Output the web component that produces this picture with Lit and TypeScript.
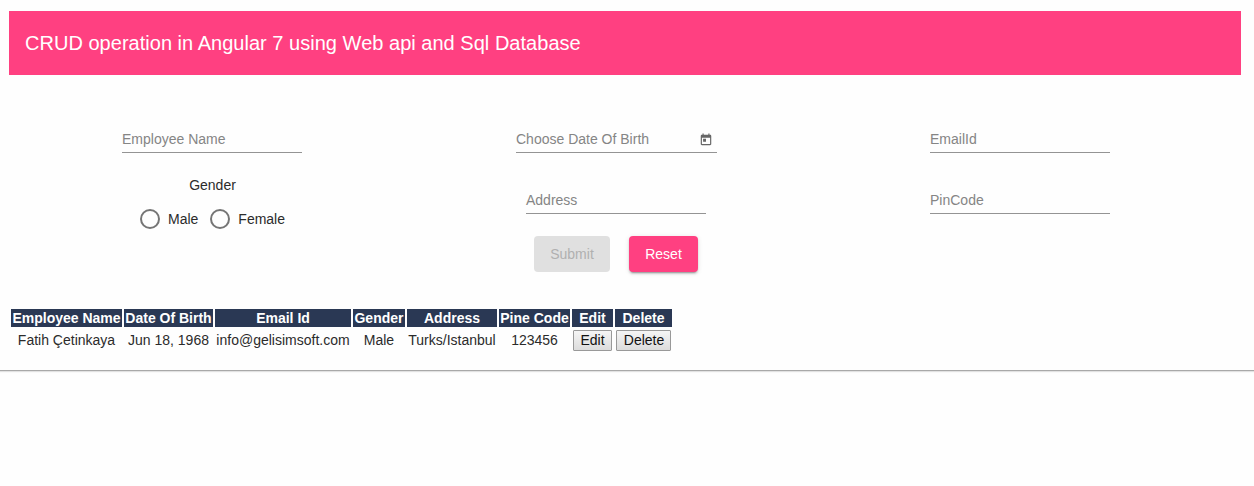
import { LitElement, html, css } from 'lit';
import { customElement, property } from 'lit/decorators.js';

@customElement('form-field')
class FormField extends LitElement {
  @property() label = '';

  static styles = css`
    :host { display: block; width: 180px; }
    .field {
      display: flex;
      align-items: center;
      justify-content: space-between;
      height: 26px;
      box-sizing: border-box;
      padding-bottom: 2px;
      border-bottom: 1px solid #949494;
      color: #858585;
      white-space: nowrap;
    }
    .suffix { display: flex; padding: 2px 4px 0 0; }
  `;

  render() {
    return html`<div class="field"><span>${this.label}</span><span class="suffix"><slot></slot></span></div>`;
  }
}

@customElement('app-root')
class AppRoot extends LitElement {
  private employees = [
    { name: 'Fatih Çetinkaya', birth: 'Jun 18, 1968', email: 'info@gelisimsoft.com', gender: 'Male', address: 'Turks/Istanbul', pin: '123456' },
  ];

  static styles = css`
    :host {
      display: block;
      height: 486px;
      overflow: hidden;
      background: #fefefe;
      color: #2b2b2b;
      font: 14px/18px "Liberation Sans", Arial, sans-serif;
    }
    .card {
      box-sizing: border-box;
      height: 371px;
      padding: 11px 13px 0 9px;
      border-bottom: 1px solid #a9a9a9;
      box-shadow: 0 1px 1px #e2e2e2;
    }
    .toolbar {
      display: flex;
      align-items: center;
      height: 64px;
      box-sizing: border-box;
      padding: 0 16px;
      background: #ff4081;
      color: #fff;
      font-size: 20px;
      line-height: 32px;
      letter-spacing: 0.022px;
      white-space: nowrap;
    }
    .form {
      display: grid;
      grid-template-columns: repeat(3, 404px);
      grid-template-rows: 49px 60px 36px;
      justify-items: center;
      padding: 52px 0 0 1px;
    }
    .date { width: 201px; margin-left: 1px; }
    .second { margin-top: 12px; }
    .gender { display: flex; flex-direction: column; align-items: center; padding-left: 1px; }
    .radios { display: flex; gap: 12px; margin-top: 15px; }
    .radio { display: flex; align-items: center; gap: 8px; height: 20px; }
    .dot {
      width: 20px;
      height: 20px;
      box-sizing: border-box;
      border: 2px solid #757575;
      border-radius: 50%;
    }
    .actions { grid-column: 2; display: flex; gap: 19px; }
    .btn {
      width: 76px;
      height: 36px;
      border: 0;
      border-radius: 4px;
      padding: 0;
      background: #e0e0e0;
      color: #b0b0b0;
      font: inherit;
    }
    .accent {
      width: 69px;
      background: #ff4081;
      color: #fff;
      box-shadow: 0 3px 1px -2px rgba(0,0,0,.2), 0 2px 2px rgba(0,0,0,.14), 0 1px 5px rgba(0,0,0,.12);
    }
    .list {
      display: grid;
      grid-template-columns: 111px 89px 136px 52px 90px 71px 41px 57px;
      gap: 2px;
      padding: 37px 0 0 2px;
      text-align: center;
      white-space: nowrap;
    }
    .head { height: 18px; background: #2a3854; color: #fff; font-weight: bold; }
    .cell { display: flex; align-items: center; justify-content: center; height: 22px; }
    .control { height: 23px; }
    .small {
      width: 39px;
      height: 21px;
      box-sizing: border-box;
      padding: 0 0 1px;
      border: 1px solid #999;
      border-radius: 1px;
      background: linear-gradient(#f5f5f5, #dcdcdc);
      color: #111;
      font: inherit;
    }
    .wide { width: 55px; padding-left: 1px; }
  `;

  render() {
    const heads = ['Employee Name', 'Date Of Birth', 'Email Id', 'Gender', 'Address', 'Pine Code', 'Edit', 'Delete'];
    return html`
      <div class="card">
        <div class="toolbar">CRUD operation in Angular 7 using Web api and Sql Database</div>
        <div class="form">
          <form-field label="Employee Name"></form-field>
          <form-field class="date" label="Choose Date Of Birth">
            <svg width="14" height="14" viewBox="0 0 24 24" fill="#666">
              <path d="M19 3h-1V1h-2v2H8V1H6v2H5c-1.11 0-1.99.9-1.99 2L3 19c0 1.100.89 2 2 2h14c1.100 0 2-.9 2-2V5c0-1.100-.9-2-2-2zm0 16H5V8h14v11zM7 10h5v5H7z" />
            </svg>
          </form-field>
          <form-field label="EmailId"></form-field>
          <div class="gender">
            <div>Gender</div>
            <div class="radios">
              <label class="radio"><span class="dot"></span>Male</label>
              <label class="radio"><span class="dot"></span>Female</label>
            </div>
          </div>
          <form-field class="second" label="Address"></form-field>
          <form-field class="second" label="PinCode"></form-field>
          <div class="actions">
            <button class="btn" disabled>Submit</button>
            <button class="btn accent">Reset</button>
          </div>
        </div>
        <div class="list">
          ${heads.map((h) => html`<div class="head">${h}</div>`)}
          ${this.employees.map((e) => html`
            ${[e.name, e.birth, e.email, e.gender, e.address, e.pin].map((v) => html`<div class="cell">${v}</div>`)}
            <div class="cell control"><button class="small">Edit</button></div>
            <div class="cell control"><button class="small wide">Delete</button></div>
          `)}
        </div>
      </div>
    `;
  }
}
